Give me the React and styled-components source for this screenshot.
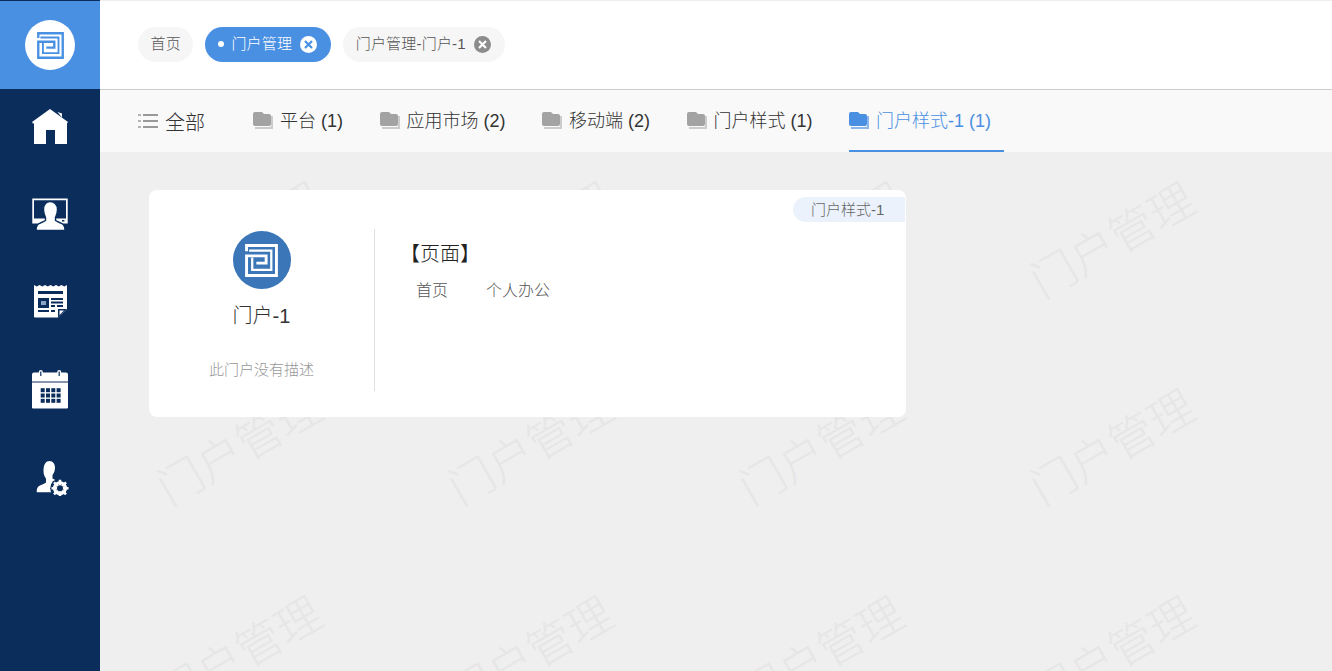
import React from "react";
import styled, { createGlobalStyle } from "styled-components";

const sans = `"Liberation Sans", "Noto Sans CJK SC", sans-serif`;

const tags = [
  { label: "首页" },
  { label: "门户管理", active: true, closable: true },
  { label: "门户管理-门户-1", closable: true },
];

const folders = [
  { label: "平台 (1)" },
  { label: "应用市场 (2)" },
  { label: "移动端 (2)" },
  { label: "门户样式 (1)" },
  { label: "门户样式-1 (1)", active: true },
];

const LogoMark = ({ size, color }) => (
  <svg width={size} height={size} viewBox="0 0 32 32" fill="none" stroke={color}>
    <path strokeWidth="2.8" d="M1.500 7V1.500H30.500V30.500H1.500V11.500H20.500V18.500H11" />
    <path strokeWidth="2.200" d="M4 6.500H25.500V25H7V13" />
  </svg>
);

const HomeIcon = () => (
  <svg width="40" height="40" viewBox="0 0 40 40" fill="#fff">
    <path d="M20 3 L38 16 L37 17.500 H37 V38 H25 V24 H16 V38 H4 V17.500 H3 L2 16 Z" />
    <path d="M27.500 6 L32 7.500 V11.500 Z" />
  </svg>
);

const MonitorIcon = () => (
  <svg width="40" height="40" viewBox="0 0 40 40">
    <path fill="#fff" d="M2.300 4.500h35.400v25H2.300zM4 6.200v18.300h32V6.200z" fillRule="evenodd" />
    <path
      fill="#fff"
      stroke="#0a2d5c"
      strokeWidth="1.400"
      d="M20 7.500c4.500 0 7.500 3.500 7.500 8 0 3.500-1 6-2 8v3c2.500 1.500 5.500 2.500 7 3.500 1.500 1 2.500 3.500 2.500 6.500H6c0-3 1-5.500 2.500-6.500 1.500-1 4.500-2 7-3.500v-3c-1-2-2-4.500-2-8 0-4.500 2.500-8 6.500-8z"
    />
    <rect x="32" y="26" width="2.400" height="1.500" fill="#0a2d5c" />
  </svg>
);

const NewsIcon = () => (
  <svg width="40" height="40" viewBox="0 0 40 40">
    <path fill="#fff" d="M4 4l2.750 1.500L9.500 4l2.750 1.500L15 4l2.750 1.500L20.500 4l2.750 1.500L26 4l2.750 1.500L31.500 4l2.750 1.500L37 4v24l-9 8.500H5a1 1 0 0 1-1-1z" />
    <path fill="#0a2d5c" d="M8 10h25v3H8zM8 17h11v10H8zM21 17h12v2H21zM21 20.500h12v2H21zM21 24h4v2H21zM27 24h6v2h-6zM8 29h11v2H8zM21 29h4v2h-4z" />
    <rect x="11" y="20" width="5" height="4" fill="#8aa4c4" />
    <path fill="#0a2d5c" d="M37 28H28v8.500z" />
    <path fill="#fff" d="M34 29.500H29.500v4.500z" />
  </svg>
);

const CalendarIcon = () => (
  <svg width="40" height="40" viewBox="0 0 40 40">
    <path fill="#fff" d="M2 5.500a2 2 0 0 1 2-2h4.800V3a2 2 0 0 1 4 0v.5h14.400V3a2 2 0 0 1 4 0v.5H36a2 2 0 0 1 2 2v7H2zM2 13.500h36v25a1 1 0 0 1-1 1H3a1 1 0 0 1-1-1z" />
    <path fill="#0a2d5c" d="M10.200 2.500h1.200V7h-1.200zM28.600 2.500h1.200V7h-1.200z" />
    {[0, 1, 2].map((row) =>
      [0, 1, 2, 3].map((col) => (
        <rect key={`${row}-${col}`} x={10.7 + col * 5.3} y={19.200 + row * 5.3} width="4" height="4" fill="#0a2d5c" />
      ))
    )}
  </svg>
);

const UserGearIcon = () => (
  <svg width="40" height="40" viewBox="0 0 40 40">
    <path fill="#fff" d="M19.500 5c3.500 0 5.500 3 5.500 6.500 0 3-1 5.500-2.500 7.500v3.500c2 1.500 6 2.500 8 4l-2 9.700H6.700c0-3 .5-5 2-6 2-1.300 5.500-2.200 7.300-3.700v-4c-1.500-2-2.500-4.500-2.500-7.500C13.500 8 16 5 19.500 5z" />
    <circle cx="30" cy="32.300" r="9.800" fill="#0a2d5c" />
    <circle cx="30" cy="32.300" r="5.500" fill="none" stroke="#fff" strokeWidth="3" />
    <path stroke="#fff" strokeWidth="2.600" d="M30 23.800v17M21.500 32.300h17M24 26.300l12 12M36 26.300l-12 12" />
    <circle cx="30" cy="32.300" r="3" fill="#0a2d5c" />
  </svg>
);

const FolderIcon = ({ color, shadow }) => (
  <svg width="20" height="17" viewBox="0 0 20 17">
    <path fill={shadow} d="M2 15h15a1 1 0 0 0 1-1V4h2v13H2z" />
    <path fill={color} d="M2 0H9l2 2h5a2 2 0 0 1 2 2v8a2 2 0 0 1-2 2H2a2 2 0 0 1-2-2V2a2 2 0 0 1 2-2z" />
  </svg>
);

const ListIcon = () => (
  <svg width="20" height="14" viewBox="0 0 20 14">
    <path fill="#b5b5b5" d="M0 0h3v2H0zM0 6h3v2H0zM0 12h3v2H0z" />
    <path fill="#999" d="M5 0h15v2H5zM5 6h15v2H5zM5 12h15v2H5z" />
  </svg>
);

const CloseGlyph = () => (
  <svg width="9" height="9" viewBox="0 0 9 9" stroke="currentColor" strokeWidth="2.200">
    <path d="M1 1l7 7M8 1L1 8" />
  </svg>
);

const App = () => {
  return (
    <Page>
      <GlobalStyle />
      <Sidebar>
        <LogoBlock>
          <LogoCircle>
            <LogoMark size={27} color="#4a90e2" />
          </LogoCircle>
        </LogoBlock>
        <Nav>
          <NavIcon><HomeIcon /></NavIcon>
          <NavIcon><MonitorIcon /></NavIcon>
          <NavIcon><NewsIcon /></NavIcon>
          <NavIcon><CalendarIcon /></NavIcon>
          <NavIcon><UserGearIcon /></NavIcon>
        </Nav>
      </Sidebar>
      <Main>
        <TagBar>
          {tags.map((tag) => (
            <Tag key={tag.label} $active={tag.active} $closable={tag.closable}>
              {tag.active && <Dot />}
              <TagLabel>{tag.label}</TagLabel>
              {tag.closable && (
                <CloseBadge $active={tag.active}>
                  <CloseGlyph />
                </CloseBadge>
              )}
            </Tag>
          ))}
        </TagBar>
        <FolderBar>
          <AllItem>
            <ListIcon />
            全部
          </AllItem>
          {folders.map((folder) => (
            <FolderItem key={folder.label} $active={folder.active}>
              <FolderIcon
                color={folder.active ? "#4a90e2" : "#a3a3a3"}
                shadow={folder.active ? "#8db8ec" : "#cccccc"}
              />
              <FolderLabel>{folder.label}</FolderLabel>
            </FolderItem>
          ))}
        </FolderBar>
        <Content>
          <Watermarks>
            {Array.from({ length: 16 }).map((_, i) => (
              <Mark key={i}>
                <span>门户管理</span>
              </Mark>
            ))}
          </Watermarks>
          <Card>
            <Badge>门户样式-1</Badge>
            <CardLeft>
              <Avatar>
                <LogoMark size={33} color="#fff" />
              </Avatar>
              <PortalName>门户-1</PortalName>
              <PortalDesc>此门户没有描述</PortalDesc>
            </CardLeft>
            <CardRight>
              <PagesTitle>【页面】</PagesTitle>
              <PagesRow>
                <PageLink>首页</PageLink>
                <PageLink>个人办公</PageLink>
              </PagesRow>
            </CardRight>
          </Card>
        </Content>
      </Main>
    </Page>
  );
};

const GlobalStyle = createGlobalStyle`
  html, body {
    margin: 0;
    height: 100%;
    overflow: hidden;
    font-family: ${sans};
    font-weight: 300;
  }
  #root {
    height: 100%;
  }
`;

const Page = styled.div`
  display: flex;
  height: 671px;
  width: 1332px;
  overflow: hidden;
`;

const Sidebar = styled.div`
  width: 100px;
  flex-shrink: 0;
  background: #0a2d5c;
  display: flex;
  flex-direction: column;
`;

const LogoBlock = styled.div`
  height: 88px;
  margin-top: 1px;
  background: #4a90e2;
  display: flex;
  align-items: center;
  justify-content: center;
`;

const LogoCircle = styled.div`
  width: 50px;
  height: 50px;
  border-radius: 50%;
  background: #fff;
  display: flex;
  align-items: center;
  justify-content: center;
`;

const Nav = styled.div`
  display: flex;
  flex-direction: column;
  align-items: center;
  gap: 47.5px;
  padding-top: 17px;
`;

const NavIcon = styled.div`
  width: 40px;
  height: 40px;
`;

const Main = styled.div`
  flex: 1;
  display: flex;
  flex-direction: column;
  min-width: 0;
`;

const TagBar = styled.div`
  background: #fff;
  border-top: 1px solid #eee;
  border-bottom: 1px solid #ccc;
  box-sizing: border-box;
  height: 90px;
  padding: 0 0 2px 38px;
  display: flex;
  align-items: center;
  gap: 12px;
`;

const Tag = styled.div`
  height: 35px;
  border-radius: 18px;
  padding: 0 ${(p) => (p.$closable ? "14px" : "12.5px")} 0 ${(p) => (p.$active ? "13px" : "12.5px")};
  display: flex;
  align-items: center;
  font-size: 15px;
  color: ${(p) => (p.$active ? "#fff" : "#555")};
  background: ${(p) => (p.$active ? "#4a90e2" : "#f6f6f6")};
`;

const TagLabel = styled.span`
  margin-bottom: 3px;
  letter-spacing: 0.2px;
`;

const Dot = styled.span`
  width: 6px;
  height: 6px;
  border-radius: 50%;
  background: #fff;
  margin: 0 7px 1px 0;
`;

const CloseBadge = styled.span`
  width: 17px;
  height: 17px;
  border-radius: 50%;
  margin-left: 8px;
  display: flex;
  align-items: center;
  justify-content: center;
  background: ${(p) => (p.$active ? "#fff" : "#8c8c8c")};
  color: ${(p) => (p.$active ? "#4a90e2" : "#fff")};
`;

const FolderBar = styled.div`
  height: 62px;
  flex-shrink: 0;
  background: #f9f9f9;
  padding-left: 38px;
  display: flex;
  align-items: stretch;
  gap: 23.5px;
`;

const AllItem = styled.div`
  display: flex;
  align-items: center;
  gap: 7px;
  font-size: 20px;
  color: #333;
  margin-right: 24.5px;
`;

const FolderItem = styled.div`
  display: flex;
  align-items: center;
  gap: 7px;
  padding-right: 13px;
  font-size: 18px;
  color: ${(p) => (p.$active ? "#4a90e2" : "#333")};
  border-bottom: 2px solid ${(p) => (p.$active ? "#4a90e2" : "transparent")};
  box-sizing: border-box;
`;

const FolderLabel = styled.span`
  margin-bottom: 3px;
`;

const Content = styled.div`
  flex: 1;
  position: relative;
  background: #efefef;
  padding: 38px 49px;
  overflow: hidden;
`;

const Watermarks = styled.div`
  position: absolute;
  top: -18px;
  left: -7px;
  display: grid;
  grid-template-columns: repeat(4, 291px);
  grid-auto-rows: 207px;
  pointer-events: none;
`;

const Mark = styled.div`
  display: flex;
  align-items: center;
  justify-content: center;
  span {
    transform: rotate(-30deg);
    font-size: 45px;
    font-weight: 300;
    color: #e6e6e6;
    white-space: nowrap;
  }
`;

const Card = styled.div`
  position: relative;
  width: 757px;
  height: 227px;
  background: #fff;
  border-radius: 8px;
  display: flex;
  box-sizing: border-box;
  padding: 39px 0 26px;
`;

const Badge = styled.div`
  position: absolute;
  top: 7px;
  right: 1px;
  width: 112px;
  height: 25px;
  box-sizing: border-box;
  padding-left: 18px;
  border-radius: 12.5px 0 0 12.5px;
  background: #ecf2fb;
  color: #666;
  font-size: 15px;
  line-height: 25px;
`;

const CardLeft = styled.div`
  width: 226px;
  box-sizing: border-box;
  border-right: 1px solid #e0e0e0;
  display: flex;
  flex-direction: column;
  align-items: center;
  padding-top: 2px;
`;

const Avatar = styled.div`
  width: 58px;
  height: 58px;
  border-radius: 50%;
  background: #3b76b8;
  display: flex;
  align-items: center;
  justify-content: center;
`;

const PortalName = styled.div`
  margin-top: 13px;
  font-size: 20px;
  line-height: 28px;
  color: #333;
`;

const PortalDesc = styled.div`
  margin-top: 30px;
  font-size: 15px;
  line-height: 20px;
  color: #999;
`;

const CardRight = styled.div`
  padding: 12px 0 0 25px;
`;

const PagesTitle = styled.div`
  font-size: 20px;
  line-height: 26px;
  color: #222;
`;

const PagesRow = styled.div`
  display: flex;
  gap: 38px;
  padding-left: 16px;
  margin-top: 13px;
`;

const PageLink = styled.div`
  font-size: 16px;
  line-height: 22px;
  color: #555;
`;

export default App;
